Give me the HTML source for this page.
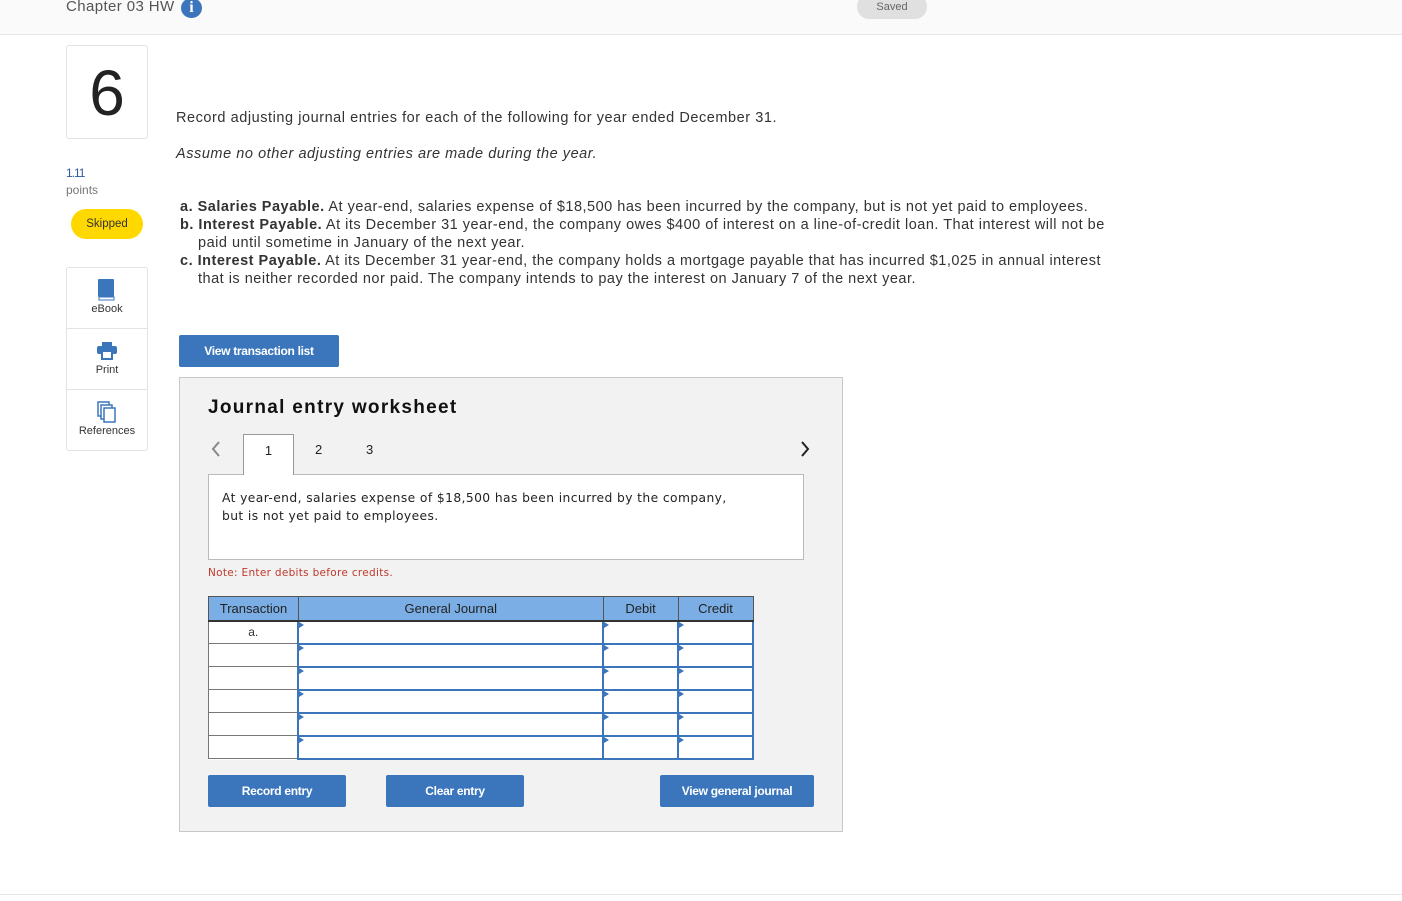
<!DOCTYPE html>
<html><head><meta charset="utf-8"><style>
*{box-sizing:border-box;margin:0;padding:0}
body{width:1402px;height:901px;background:#fff;font-family:"Liberation Sans",sans-serif;color:#333;position:relative;overflow:hidden}
.a{position:absolute}
.top{left:0;top:0;width:1402px;height:35px;background:#fafafa;border-bottom:1px solid #e6e6e6}
.btn{position:absolute;background:#3b76bd;color:#fff;font-weight:bold;font-size:12px;text-align:center;border-radius:2px;letter-spacing:-0.3px}
.side{border:1px solid #e3e3e3;border-radius:3px;background:#fff}
p.t{font-size:14.5px;color:#333;letter-spacing:0.55px}
table{border-collapse:collapse;position:absolute;left:208px;top:596px;width:546px;background:#fff}
th{background:#7aaee4;font-weight:normal;font-size:13px;color:#222;height:24px;border:1px solid #555;border-bottom:2px solid #333}
td{height:23px;border:1px solid #777;position:relative;font-size:12px;text-align:center}
td.i{border:2px solid #3b76bd;border-top:1px solid #3b76bd}
td.i:before{content:"";position:absolute;left:0;top:0;border-left:5px solid #3b76bd;border-top:3px solid transparent;border-bottom:3px solid transparent}
</style></head><body>
<div class="a top"></div>
<div class="a" style="left:66px;top:-2px;font-size:15px;color:#555;letter-spacing:0.4px">Chapter 03 HW</div>
<div class="a" style="left:181px;top:-2px;width:21px;height:20px;border-radius:50%;background:#3b76bd;color:#fff;font-weight:bold;font-family:'Liberation Serif',serif;font-size:16px;text-align:center;line-height:20px">i</div>
<div class="a" style="left:857px;top:-6px;width:70px;height:25px;border-radius:12px;background:#e0e0e0;color:#666;font-size:11px;text-align:center;line-height:27px">Saved</div>

<div class="a side" style="left:66px;top:45px;width:82px;height:94px;text-align:center;font-size:64px;line-height:94px;color:#222">6</div>
<div class="a" style="left:66px;top:166px;font-size:12px;color:#2f5b9e;letter-spacing:-1px">1.11</div>
<div class="a" style="left:66px;top:183px;font-size:12px;color:#777">points</div>
<div class="a" style="left:71px;top:209px;width:72px;height:30px;border-radius:15px;background:#ffd800;font-size:11.5px;text-align:center;line-height:30px;color:#333">Skipped</div>

<div class="a side" style="left:66px;top:267px;width:82px;height:184px"></div>
<div class="a" style="left:67px;top:328px;width:80px;height:1px;background:#e3e3e3"></div>
<div class="a" style="left:67px;top:389px;width:80px;height:1px;background:#e3e3e3"></div>
<svg class="a" style="left:97px;top:279px" width="20" height="22"><rect x="1" y="0" width="16" height="18" rx="1" fill="#3b76bd"/><rect x="2" y="18" width="15" height="3" fill="#fff" stroke="#3b76bd"/></svg>
<div class="a" style="left:67px;top:303px;width:80px;text-align:center;font-size:11px">eBook</div>
<svg class="a" style="left:96px;top:341px" width="22" height="20"><rect x="6" y="1" width="10" height="4" fill="#3b76bd"/><rect x="1" y="5" width="20" height="8" rx="2" fill="#3b76bd"/><rect x="6" y="10" width="10" height="8" fill="#fff" stroke="#3b76bd" stroke-width="2"/></svg>
<div class="a" style="left:67px;top:364px;width:80px;text-align:center;font-size:11px">Print</div>
<svg class="a" style="left:97px;top:401px" width="20" height="22"><rect x="1" y="1" width="11" height="14" fill="#fff" stroke="#3b76bd" stroke-width="1.5"/><rect x="4" y="4" width="11" height="14" fill="#fff" stroke="#3b76bd" stroke-width="1.5"/><rect x="7" y="7" width="11" height="14" fill="#fff" stroke="#3b76bd" stroke-width="1.5"/></svg>
<div class="a" style="left:67px;top:425px;width:80px;text-align:center;font-size:11px">References</div>

<p class="a t" style="left:176px;top:110px">Record adjusting journal entries for each of the following for year ended December 31.</p>
<p class="a t" style="left:176px;top:146px;font-style:italic">Assume no other adjusting entries are made during the year.</p>
<div class="a" style="left:180px;top:198px;width:940px;font-size:14.5px;line-height:18px;letter-spacing:0.5px">
<div style="padding-left:18px;text-indent:-18px"><b>a.</b> <b>Salaries Payable.</b> At year-end, salaries expense of $18,500 has been incurred by the company, but is not yet paid to employees.</div>
<div style="padding-left:18px;text-indent:-18px"><b>b.</b> <b>Interest Payable.</b> At its December 31 year-end, the company owes $400 of interest on a line-of-credit loan. That interest will not be paid until sometime in January of the next year.</div>
<div style="padding-left:18px;text-indent:-18px"><b>c.</b> <b>Interest Payable.</b> At its December 31 year-end, the company holds a mortgage payable that has incurred $1,025 in annual interest that is neither recorded nor paid. The company intends to pay the interest on January 7 of the next year.</div>
</div>

<div class="btn" style="left:179px;top:335px;width:160px;height:32px;line-height:32px">View transaction list</div>

<div class="a" style="left:179px;top:377px;width:664px;height:455px;background:#f2f2f2;border:1px solid #c8c8c8"></div>
<div class="a" style="left:208px;top:397px;font-size:19px;font-weight:bold;color:#111;letter-spacing:1.3px">Journal entry worksheet</div>
<svg class="a" style="left:210px;top:440px" width="12" height="18"><path d="M9 2L3 9l6 7" fill="none" stroke="#888" stroke-width="2"/></svg>
<svg class="a" style="left:799px;top:440px" width="12" height="18"><path d="M3 2l6 7-6 7" fill="none" stroke="#222" stroke-width="2"/></svg>
<div class="a" style="left:208px;top:474px;width:596px;height:86px;background:#fff;border:1px solid #bbb"></div>
<div class="a" style="left:243px;top:434px;width:51px;height:41px;background:#fff;border:1px solid #999;border-bottom:none;text-align:center;line-height:32px;font-size:13px;color:#222">1</div>
<div class="a" style="left:315px;top:442px;font-size:13px;color:#222">2</div>
<div class="a" style="left:366px;top:442px;font-size:13px;color:#222">3</div>
<div class="a" style="left:222px;top:489px;font-family:'DejaVu Sans',sans-serif;font-size:12.3px;line-height:18px;color:#222;letter-spacing:0.4px">At year-end, salaries expense of $18,500 has been incurred by the company,<br>but is not yet paid to employees.</div>
<div class="a" style="left:208px;top:567px;font-family:'DejaVu Sans',sans-serif;font-size:10.5px;color:#c0392b;letter-spacing:0.3px">Note: Enter debits before credits.</div>

<table>
<tr><th style="width:90px">Transaction</th><th style="width:305px">General Journal</th><th style="width:75px">Debit</th><th style="width:75px">Credit</th></tr>
<tr><td>a.</td><td class="i"></td><td class="i"></td><td class="i"></td></tr>
<tr><td></td><td class="i"></td><td class="i"></td><td class="i"></td></tr>
<tr><td></td><td class="i"></td><td class="i"></td><td class="i"></td></tr>
<tr><td></td><td class="i"></td><td class="i"></td><td class="i"></td></tr>
<tr><td></td><td class="i"></td><td class="i"></td><td class="i"></td></tr>
<tr><td></td><td class="i"></td><td class="i"></td><td class="i"></td></tr>
</table>

<div class="btn" style="left:208px;top:775px;width:138px;height:32px;line-height:32px">Record entry</div>
<div class="btn" style="left:386px;top:775px;width:138px;height:32px;line-height:32px">Clear entry</div>
<div class="btn" style="left:660px;top:775px;width:154px;height:32px;line-height:32px">View general journal</div>
<div class="a" style="left:0;top:894px;width:1402px;height:1px;background:#e6e6e6"></div>
</body></html>
